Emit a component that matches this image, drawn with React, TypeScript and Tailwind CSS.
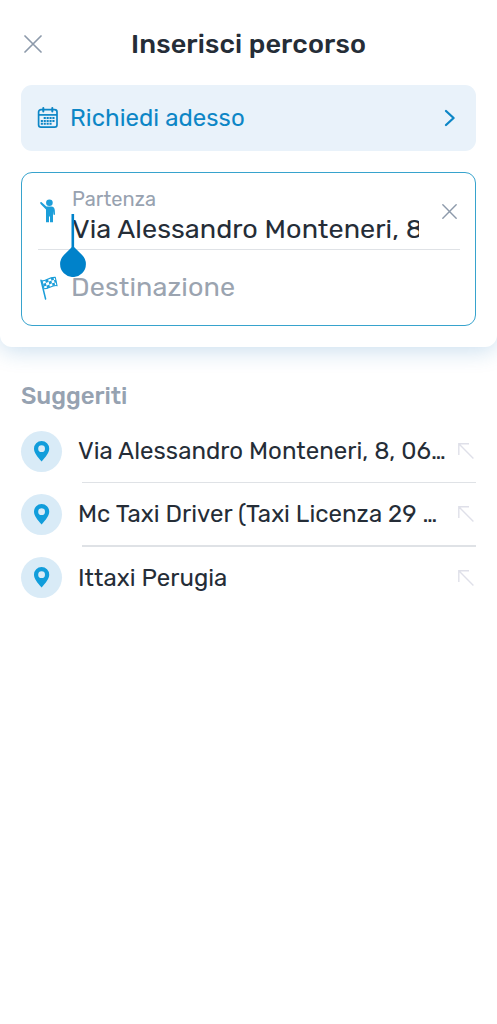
import React from 'react'

interface IPlace {
  label: string
}

const places: IPlace[] = [
  { label: 'Via Alessandro Monteneri, 8, 06…' },
  { label: 'Mc Taxi Driver (Taxi Licenza 29 …' },
  { label: 'Ittaxi Perugia' },
]

const CloseIcon: React.FC<{ className: string }> = ( { className } ) => (
  <svg className={className}
    viewBox="0 0 18 18"
    fill="none"
    stroke="#8d9aab"
    strokeWidth="1.7"
    strokeLinecap="round"
  >
    <path d="M1 1 17 17M17 1 1 17" />
  </svg>
)

const CalendarIcon = () => (
  <svg className="h-[22px] w-[22px] shrink-0"
    viewBox="0 0 22 22"
    fill="none"
    stroke="#0d86c6"
    strokeWidth="1.7"
  >
    <rect x="1.6" y="2.6" width="18.4" height="17.6" rx="2.4" />
    <path d="M1.6 7.9H20" />
    <path d="M6.3 1v3.4M15.3 1v3.4"
      strokeWidth="2"
      strokeLinecap="round"
    />
    <path d="M6.7 11H18M3.8 13.9H18M3.8 16.8H15.2"
      strokeWidth="2"
      strokeDasharray="2.1 .8"
    />
  </svg>
)

const PersonIcon = () => (
  <svg className="h-6 w-4 shrink-0"
    viewBox="0 0 16 24"
    fill="#1c9ed9"
  >
    <circle cx="9.4" cy="3.7" r="3.3" />
    <path d="M.3 3.5C.6 2.9 1.2 2.9 1.6 3.2L6.4 7.4H11.2C13.4 7.4 14.7 8.9 14.8 11.2L15 15.2C15 16.2 13.5 16.3 13.4 15.3L13 12V23.3H10V17.5H9V23.3H6V10.6L.6 5C.2 4.5.1 4 .3 3.5Z" />
  </svg>
)

const FlagIcon = () => (
  <svg className="h-6 w-[18px] shrink-0"
    viewBox="0 0 18 24"
    fill="none"
    stroke="#1c9ed9"
  >
    <path d="M1 4.3 5.6 23"
      strokeWidth="1.5"
      strokeLinecap="round"
    />
    <path d="M2 4.8C5.8 5.5 8.5 1 15.3 1.4L17 9.6C11.5 9 8.5 13.2 4 12.8Z"
      strokeWidth="1.1"
    />
    <g fill="#1c9ed9"
      stroke="none"
    >
      <path d="M5.2 4.4 8 3 8.7 5.7 5.9 7.1ZM10.8 1.9 13.4 1.3 14 4 11.4 4.6ZM8.7 5.7 11.4 4.6 12 7.3 9.3 8.4ZM14 4 16 3.9 16.6 6.6 14.6 6.7ZM3.2 7.7 5.9 7.1 6.5 9.8 3.8 10.4ZM6.5 9.8 9.3 8.4 9.9 11.1 7.2 12.4ZM12 7.3 14.6 6.7 15.1 9.5 12.6 10Z" />
    </g>
  </svg>
)

const PinIcon = () => (
  <svg className="h-[21px] w-4"
    viewBox="0 0 16 21"
    fill="#119ddb"
  >
    <path fillRule="evenodd"
      d="M7.6 0A7.6 7.6 0 0 0 0 7.7C0 11.5 3.4 15.7 7.6 20.6 11.8 15.7 15.2 11.5 15.2 7.7A7.6 7.6 0 0 0 7.6 0ZM7.6 4.3A3.4 3.4 0 1 1 7.6 11.1 3.4 3.4 0 0 1 7.6 4.3Z"
    />
  </svg>
)

const ArrowIcon = () => (
  <svg className="h-4 w-4 shrink-0"
    viewBox="0 0 16 16"
    fill="none"
    stroke="#dfe0e9"
    strokeWidth="1.4"
  >
    <path d="M.8 12V.8H11M.8.8 15.4 15.4" />
  </svg>
)

const App: React.FC = () => {
  return (
    <div className="min-h-screen bg-white font-[Rubik,Roboto,sans-serif] text-[#252d37]">
      <header className="h-[347px] rounded-b-[12px] bg-white px-[21px] shadow-[0_4px_22px_rgba(20,110,180,0.22)]">
        <div className="grid h-[85px] grid-cols-[24px_1fr_24px] items-center pt-[3px]">
          <CloseIcon className="ml-[3px] h-[18px] w-[18px]" />
          <h1 className="text-center text-[27px] font-medium tracking-[0.14px] whitespace-nowrap">Inserisci percorso</h1>
        </div>

        <button className="flex h-[66px] w-full items-center rounded-[11px] bg-[#e9f2fa] pr-5 pl-4 text-[#0d86c6]">
          <CalendarIcon />
          <span className="ml-[11px] text-[24px] tracking-[0.06px] whitespace-nowrap">Richiedi adesso</span>
          <svg className="ml-auto h-[18px] w-[12px]"
            viewBox="0 0 12 18"
            fill="none"
            stroke="currentColor"
            strokeWidth="2.3"
            strokeLinecap="round"
            strokeLinejoin="round"
          >
            <path d="M2 2 9.6 9 2 16" />
          </svg>
        </button>

        <div className="mt-[21px] h-[154px] rounded-[11px] border-[1.5px] border-[#37a3cd] pr-[15px] pl-4">
          <div className="flex h-[77px] border-b-[1.5px] border-[#dfe2e6]">
            <div className="mt-[26px] ml-[2px] w-[32px]">
              <PersonIcon />
            </div>
            <div className="relative w-[347px]">
              <div className="mt-[14px] text-[20px] leading-[24px] tracking-[0.05px] text-[#98a2b0]">Partenza</div>
              <div className="h-[36px] overflow-hidden text-[27px] leading-[36px] tracking-[0.06px] whitespace-nowrap">Via Alessandro Monteneri, 8</div>
              {/* caret and its drag handle */}
              <svg className="absolute top-[41px] -left-[12px] h-[63px] w-[26px]"
                viewBox="0 0 26 63"
                fill="#0082ca"
              >
                <rect x="11.5" width="2.6" height="36" />
                <path d="M13 32 22.1 41A12.9 12.9 0 1 1 3.9 41Z" />
              </svg>
            </div>
            <CloseIcon className="mt-[31px] ml-auto mr-[3px] h-[15px] w-[15px]" />
          </div>
          <div className="flex h-[75px] items-center">
            <div className="ml-[2px] w-[31px]">
              <FlagIcon />
            </div>
            <span className="text-[27px] tracking-[0.1px] text-[#9ba4b0]">Destinazione</span>
          </div>
        </div>
      </header>

      <main className="pt-[32px] pl-[21px] pr-[21px]">
        <h2 className="h-[41px] text-[24px] leading-[34px] font-medium tracking-[-0.05px] text-[#96a2b1]">Suggeriti</h2>
        <ul>
          {places.map( ( place, placeIdx ) => (
            <li key={place.label}>
              <div className="flex h-[62px] items-center">
                <span className="flex h-[41px] w-[41px] shrink-0 items-center justify-center rounded-full bg-[#d9ebf7]">
                  <PinIcon />
                </span>
                <span className="ml-4 flex-1 text-[24px] tracking-[0.04px] whitespace-nowrap">{place.label}</span>
                <span className="mr-[2px]">
                  <ArrowIcon />
                </span>
              </div>
              {placeIdx !== places.length - 1 && (
                <div className="ml-[61px] h-[1.3px] bg-[#dfe2e6]" />
              )}
            </li>
          ) )}
        </ul>
      </main>
    </div>
  )
}

export default App
